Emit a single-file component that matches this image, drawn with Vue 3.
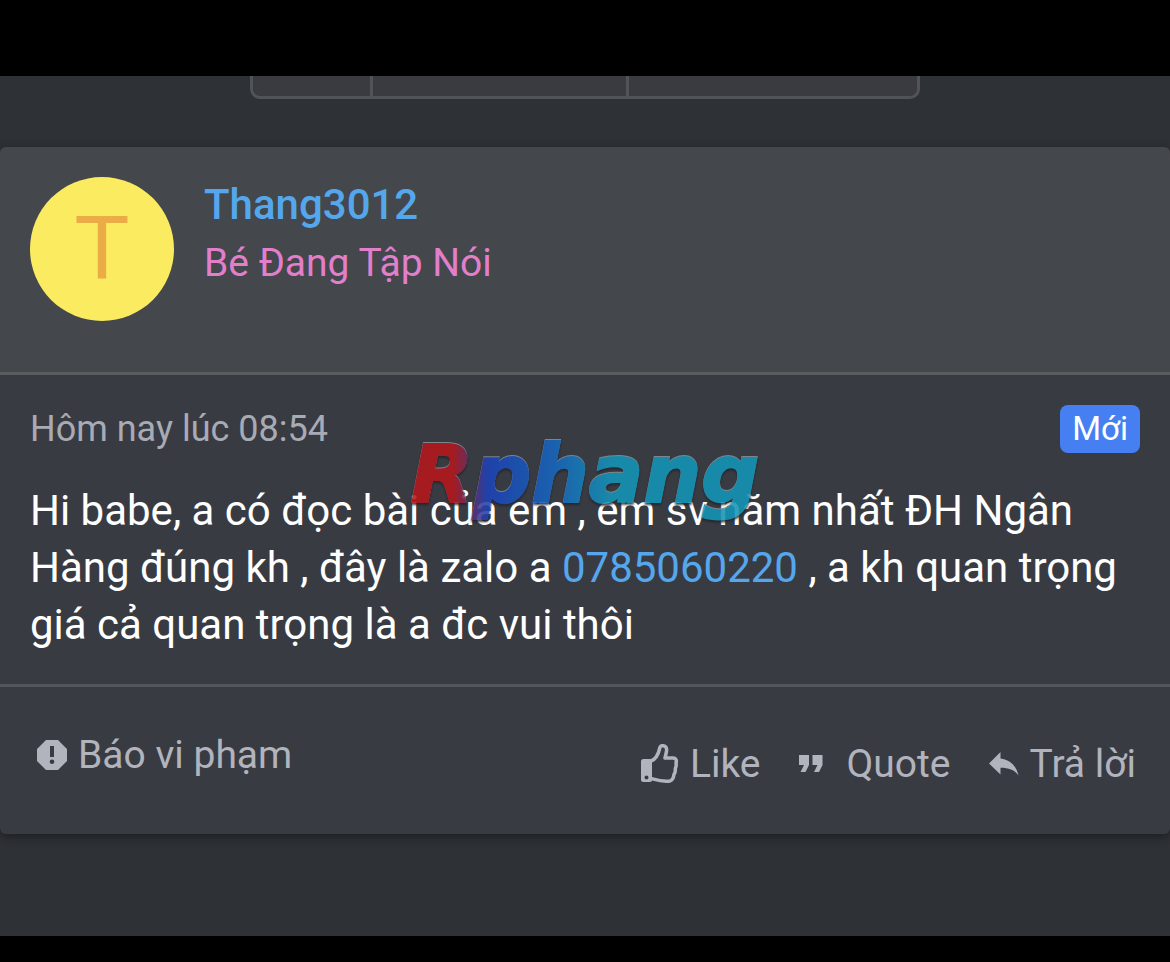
<script setup>
const author = { name: 'Thang3012', title: 'Bé Đang Tập Nói', initial: 'T' }
</script>

<template>
  <div class="frame">
    <main class="screen">
      <nav class="pager" aria-label="Pages">
        <span class="page"></span>
        <span class="page wide"></span>
        <span class="page last"></span>
      </nav>

      <article class="post">
        <header class="author">
          <div class="avatar">{{ author.initial }}</div>
          <div class="identity">
            <a class="name" href="#">{{ author.name }}</a>
            <span class="title">{{ author.title }}</span>
          </div>
        </header>

        <section class="content">
          <div class="meta">
            <time>Hôm nay lúc 08:54</time>
            <span class="badge">Mới</span>
          </div>
          <p class="message">
            Hi babe, a có đọc bài của em , em sv năm nhất ĐH Ngân Hàng đúng kh , đây là zalo a
            <a href="#">0785060220</a> , a kh quan trọng giá cả quan trọng là a đc vui thôi
          </p>
          <div class="watermark">Rphang</div>
        </section>

        <footer class="actions">
          <button type="button" class="action report">
            <svg width="30" height="30" viewBox="0 0 30 30" aria-hidden="true">
              <path fill="currentColor" fill-rule="evenodd" d="M9 0H21L30 9V21L21 30H9L0 21V9ZM13 6V17H17V6ZM15 19.5A2.3 2.3 0 1 0 15 24.1A2.3 2.3 0 1 0 15 19.5Z" />
            </svg>
            Báo vi phạm
          </button>
          <div class="reactions">
            <button type="button" class="action">
              <svg width="38" height="40" viewBox="0 1 38 40" aria-hidden="true">
                <path fill="currentColor" fill-rule="evenodd" d="M2.5 16H8.500Q10 16 11 17V36.500Q11 39 9 39H2.500Q0 39 0 36.500V18.500Q0 16 2.500 16ZM5.500 32.500A2 2 0 1 0 5.500 36.500A2 2 0 1 0 5.500 32.500Z" />
                <path fill="none" stroke="currentColor" stroke-width="3.500" stroke-linejoin="round" stroke-linecap="round" d="M10 18C14 16.500 17 12.500 18.500 6C19 3 20 2.500 22 2.700C25 3 26 5 25.500 8.500L24 15H32C35 15 36 17.500 35 20C35.500 22 35 24 34.300 25.500C34.600 28 34 30 33 31.500C32.500 35 31.500 37 29 38C22 39.200 17 37.500 10 35.500" />
              </svg>
              Like
            </button>
            <button type="button" class="action quote">
              <svg width="24" height="18" viewBox="0 0 24 18" aria-hidden="true">
                <path fill="currentColor" d="M0 0H10V10L6.500 17H1.500L5 10H0ZM13.500 0H23.500V10L20 17H15L18.500 10H13.500Z" />
              </svg>
              Quote
            </button>
            <button type="button" class="action reply">
              <svg width="30" height="24" viewBox="0 0 30 24" aria-hidden="true">
                <path fill="currentColor" d="M0 11.500L11.500 0V6.500C22 8 27.500 14.500 29.500 23.500C25.500 18 20 15.800 11.500 15.800V22.500Z" />
              </svg>
              Trả lời
            </button>
          </div>
        </footer>
      </article>
    </main>
  </div>
</template>

<style>
body {
  margin: 0;
  background: #000;
}
</style>

<style scoped>
.frame {
  box-sizing: border-box;
  min-height: 100vh;
  padding: 76px 0 26px;
  display: flex;
  flex-direction: column;
  background: #000;
  font-family: Roboto, 'Liberation Sans', sans-serif;
}
.screen {
  flex: 1;
  background: #2e3135;
}
.pager {
  box-sizing: border-box;
  width: 670px;
  max-width: 100%;
  height: 23px;
  margin: 0 auto 48px;
  display: flex;
  border: 3px solid #505359;
  border-top: 0;
  border-radius: 0 0 10px 10px;
  background: #3a3a41;
}
.page {
  flex: 117;
  border-right: 3px solid #505359;
}
.page.wide {
  flex: 253;
}
.page.last {
  flex: 288;
  border-right: 0;
}
.post {
  border-radius: 6px;
  background: #393b43;
  box-shadow: 0 3px 10px #1c1f24;
}
.author {
  display: flex;
  gap: 30px;
  height: 195px;
  padding: 30px 30px 0;
  border-bottom: 3px solid #5a5d60;
  border-radius: 6px 6px 0 0;
  background: #44474b;
}
.avatar {
  width: 144px;
  height: 144px;
  border-radius: 50%;
  background: #fbeb60;
  color: #ebac45;
  font-family: 'Liberation Sans', sans-serif;
  font-size: 90px;
  line-height: 142px;
  text-align: center;
}
.identity {
  display: flex;
  flex-direction: column;
}
.name {
  color: #55a7ed;
  font-size: 42px;
  font-weight: 500;
  line-height: 56px;
  text-decoration: none;
}
.title {
  color: #e27fcb;
  font-size: 39px;
  line-height: 60px;
}
.content {
  position: relative;
  padding: 30px;
  border-bottom: 3px solid #53565c;
}
.meta {
  display: flex;
  justify-content: space-between;
  align-items: center;
  height: 48px;
  color: #a8abb4;
  font-size: 36px;
}
.badge {
  padding: 0 12px;
  border-radius: 8px;
  background: #467ff2;
  color: #fff;
  font-size: 33px;
  line-height: 48px;
}
.message {
  margin: 29px 0 1px;
  color: #fff;
  font-size: 42px;
  line-height: 57px;
}
.message a {
  color: #55a7ed;
  text-decoration: none;
}
.watermark {
  position: absolute;
  top: 49px;
  left: 0;
  right: 0;
  width: max-content;
  margin: 0 auto;
  font: italic bold 81px/100px 'DejaVu Sans', sans-serif;
  color: transparent;
  -webkit-text-stroke: 2px transparent;
  background: linear-gradient(90deg, #b5171b 12%, #1c43b8 22%, #1768bd 42%, #1496b8 58%);
  background-clip: text;
  filter: drop-shadow(0 -1px 0 #8a9098) drop-shadow(0 2px 1px #22242a);
  opacity: 0.88;
  pointer-events: none;
}
.actions {
  display: flex;
  justify-content: space-between;
  align-items: flex-start;
  height: 102px;
  padding: 45px 34px 0 37px;
}
.reactions {
  display: flex;
  gap: 38px;
  padding-top: 9px;
}
.action {
  display: flex;
  align-items: center;
  gap: 11px;
  padding: 0;
  border: 0;
  background: none;
  color: #b1b4bd;
  font-family: inherit;
  font-size: 39px;
  line-height: 46px;
}
.quote {
  gap: 24px;
}
</style>
